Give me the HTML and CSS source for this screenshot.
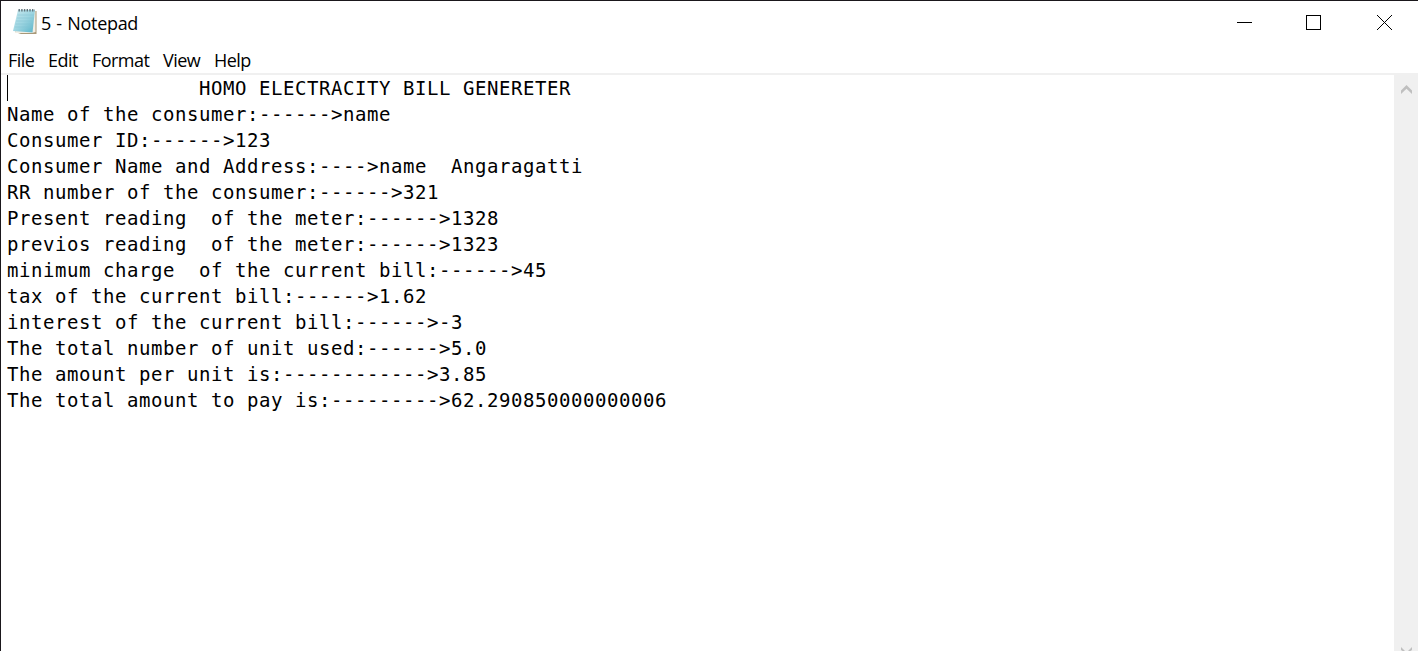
FILE: index.html
```html
<!DOCTYPE html>
<html lang="en">
<head>
<meta charset="utf-8">
<title>5 - Notepad</title>
<link rel="stylesheet" href="styles.css">
</head>
<body>
<div class="window">
  <header class="titlebar">
    <svg class="app-icon" width="26" height="28" viewBox="0 0 26 28">
      <defs><linearGradient id="page" x1="0" y1="0" x2="1" y2="1"><stop offset="0" stop-color="#c9e9ef"/><stop offset=".5" stop-color="#9dd5e1"/><stop offset="1" stop-color="#59b3c8"/></linearGradient></defs>
      <path d="M7 3H24.500V26H9L3 24Z" fill="#a89878"/>
      <path d="M6 3H23.500V24L20 25H3Z" fill="#f1eee4"/>
      <path d="M6 2H23L20.500 24.500L1 23Z" fill="url(#page)"/>
      <path d="M5.500 7H22M5 10H21.500M4 13H21M3.500 16H21M3 19H20.500" stroke="#83c3d2" stroke-width=".5"/>
      <path d="M6.500 2.200H23" stroke="#60737a" stroke-width="2.600" stroke-dasharray="1.400 1.300"/>
    </svg>
    <span class="title">5 - Notepad</span>
    <svg class="controls" width="156" height="16" viewBox="0 0 156 16" fill="none" stroke="#000">
      <path d="M0 7.500H15"/>
      <rect x="69.500" y=".5" width="14" height="14"/>
      <path d="M140 0L155 15M155 0L140 15" stroke-width="1"/>
    </svg>
  </header>
  <nav class="menubar">
    <span class="file">File</span><span class="edit">Edit</span><span class="format">Format</span><span class="view">View</span><span class="help">Help</span>
  </nav>
  <main class="editor">
    <pre class="text"><span class="caret"></span>                HOMO ELECTRACITY BILL GENERETER
Name of the consumer:------&gt;name
Consumer ID:------&gt;123
Consumer Name and Address:----&gt;name  Angaragatti
RR number of the consumer:------&gt;321
Present reading  of the meter:------&gt;1328
previos reading  of the meter:------&gt;1323
minimum charge  of the current bill:------&gt;45
tax of the current bill:------&gt;1.62
interest of the current bill:------&gt;-3
The total number of unit used:------&gt;5.0
The amount per unit is:------------&gt;3.85
The total amount to pay is:---------&gt;62.290850000000006</pre>
    <div class="scrollbar">
      <svg width="11" height="9" viewBox="0 0 11 9"><path d="M0 5.500L5.500 0L11 5.500V9L5.500 3.700L0 9Z" fill="#bfbfbf"/></svg>
      <svg width="11" height="4" viewBox="0 0 11 4"><path d="M0 0L4 4H1.500L0 3ZM11 0L7 4H9.500L11 3Z" fill="#bfbfbf"/></svg>
    </div>
  </main>
</div>
</body>
</html>
```
FILE: styles.css
```css
* { box-sizing: border-box; }
body { margin: 0; overflow: hidden; background: #fff; color: #000; }
.window { display: flex; flex-direction: column; height: 651px; border-top: 1px solid #1a171b; border-left: 1px solid #1a171b; }
.titlebar { display: flex; height: 46px; padding: 7px 25px 0 11px; font: 18px/30px "Open Sans", sans-serif; }
.app-icon { flex: none; }
.title { margin-left: 3px; letter-spacing: -.3px; word-spacing: 1px; }
.controls { margin: 7px 0 0 auto; }
.menubar { display: flex; height: 26px; padding-left: 7px; font: 18px/27px "Open Sans", sans-serif; letter-spacing: -.55px; white-space: nowrap; }
.file { width: 40px; }
.edit { width: 44px; }
.format { width: 71px; }
.view { width: 51px; }
.editor { display: flex; flex: 1; min-height: 0; border-top: 2px solid #f0f0f0; }
.text { position: relative; flex: 1; margin: 0; padding: 0 0 0 6px; font: 19px/26px "DejaVu Sans Mono", monospace; letter-spacing: .561px; }
.caret { position: absolute; left: 6px; top: 0; width: 1px; height: 26px; background: #000; }
.scrollbar { display: flex; flex-direction: column; align-items: center; justify-content: space-between; width: 24px; padding-top: 10px; background: #f0f0f0; }
```
